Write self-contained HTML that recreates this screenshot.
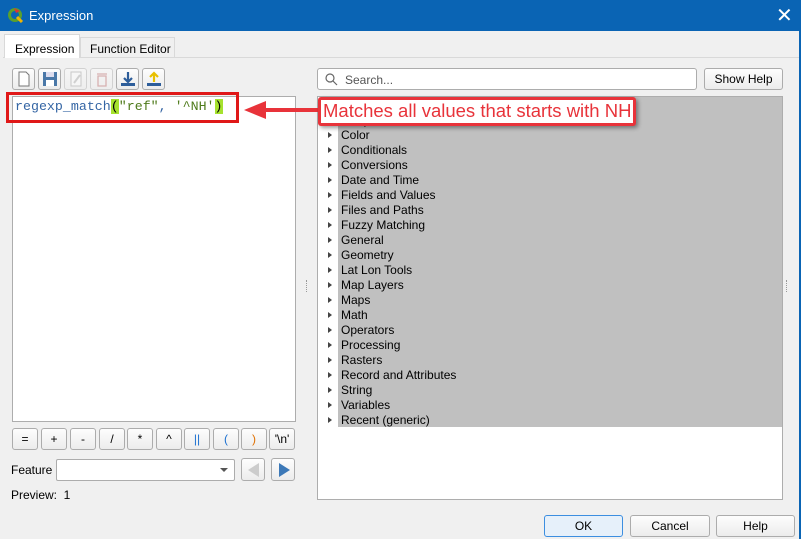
<!DOCTYPE html>
<html><head><meta charset="utf-8"><style>
*{box-sizing:border-box;margin:0;padding:0}
body{width:801px;height:539px;background:#f0f0f0;font-family:"Liberation Sans",sans-serif;font-size:12px;color:#000;position:relative;overflow:hidden}
.abs{position:absolute}
.btn{position:absolute;background:linear-gradient(#fdfdfd,#ececec);border:1px solid #acacac;border-radius:3px;text-align:center;font-size:12px}
.tree div{height:15px;line-height:15px;position:relative;padding-left:23px}
.tree div:before{content:"";position:absolute;left:10px;top:4px;border-left:4px solid #444;border-top:3.5px solid transparent;border-bottom:3.5px solid transparent}
</style></head><body>
<div class="abs" style="left:0;top:0;width:801px;height:31px;background:#0a64b4"></div>
<div class="abs" style="left:799px;top:0;width:2px;height:539px;background:#0a64b4"></div>
<svg class="abs" style="left:8px;top:7px" width="16" height="16" viewBox="0 0 16 16"><circle cx="7" cy="8" r="5.5" fill="none" stroke="#5aa02c" stroke-width="3"/><path d="M9 10l5 5" stroke="#f0b400" stroke-width="3"/><path d="M6 1l6 3-4 2z" fill="#d33"/></svg>
<div class="abs" style="left:29px;top:8px;color:#fff;font-size:13px">Expression</div>
<div class="abs" style="left:776px;top:3px;color:#fff;font-size:20px">✕</div>
<div class="abs" style="left:3px;top:57px;width:796px;height:1px;background:#d9d9d9"></div>
<div class="abs" style="left:4px;top:34px;width:76px;height:24px;background:#fff;border:1px solid #d9d9d9;border-bottom:none;padding:7px 0 0 10px">Expression</div>
<div class="abs" style="left:80px;top:37px;width:95px;height:20px;background:#f0f0f0;border:1px solid #d9d9d9;border-bottom:none;padding:4px 0 0 9px">Function Editor</div>
<div class="btn" style="left:12px;top:68px;width:23px;height:22px"><svg width="14" height="16" style="margin-top:2px"><path d="M2 1h7l3 3v11H2z" fill="#fff" stroke="#777"/></svg></div>
<div class="btn" style="left:38px;top:68px;width:23px;height:22px"><svg width="16" height="16" style="margin-top:2px"><rect x="1" y="1" width="14" height="14" fill="#4a78a8"/><rect x="4" y="1" width="8" height="5" fill="#dde"/><rect x="4" y="9" width="8" height="6" fill="#fff"/></svg></div>
<div class="btn" style="left:64px;top:68px;width:23px;height:22px;opacity:.45"><svg width="14" height="16" style="margin-top:2px"><path d="M2 1h10v14H2z" fill="#fff" stroke="#999"/><path d="M5 12l6-8" stroke="#aaa" stroke-width="2"/></svg></div>
<div class="btn" style="left:90px;top:68px;width:23px;height:22px;opacity:.45"><svg width="14" height="16" style="margin-top:2px"><path d="M3 5h8v10H3zM2 3h10" fill="none" stroke="#b66" stroke-width="1.3"/></svg></div>
<div class="btn" style="left:116px;top:68px;width:23px;height:22px"><svg width="16" height="16" style="margin-top:2px"><path d="M8 1v9M4 7l4 4 4-4" fill="none" stroke="#2d5d9a" stroke-width="2.2"/><rect x="1" y="12" width="14" height="3" fill="#2d5d9a"/></svg></div>
<div class="btn" style="left:142px;top:68px;width:23px;height:22px"><svg width="16" height="16" style="margin-top:2px"><path d="M8 11V3M4 6l4-4 4 4" fill="none" stroke="#e8c000" stroke-width="2.2"/><rect x="1" y="12" width="14" height="3" fill="#2d5d9a"/></svg></div>
<div class="abs" style="left:12px;top:96px;width:284px;height:326px;background:#fff;border:1px solid #adadad"></div>
<div class="abs" style="left:6px;top:92px;width:233px;height:31px;border:3px solid #e01818"></div>
<div class="abs" style="left:15px;top:99px;font-family:'Liberation Mono',monospace;font-size:13.3px;color:#3465a4;white-space:pre">regexp_match<span style="background:#a6e22e;color:#000">(</span><span style="color:#4e7a1a">"ref"</span>, <span style="color:#4e7a1a">'^NH'</span><span style="background:#a6e22e;color:#000">)</span></div>
<div class="btn" style="left:12px;top:428px;width:26px;height:22px;line-height:20px">=</div>
<div class="btn" style="left:41px;top:428px;width:26px;height:22px;line-height:20px">+</div>
<div class="btn" style="left:70px;top:428px;width:26px;height:22px;line-height:20px">-</div>
<div class="btn" style="left:99px;top:428px;width:26px;height:22px;line-height:20px">/</div>
<div class="btn" style="left:127px;top:428px;width:26px;height:22px;line-height:20px">*</div>
<div class="btn" style="left:156px;top:428px;width:26px;height:22px;line-height:20px">^</div>
<div class="btn" style="left:184px;top:428px;width:26px;height:22px;line-height:20px;color:#1a6fd0">||</div>
<div class="btn" style="left:213px;top:428px;width:26px;height:22px;line-height:20px;color:#1a6fd0">(</div>
<div class="btn" style="left:241px;top:428px;width:26px;height:22px;line-height:20px;color:#e07000">)</div>
<div class="btn" style="left:269px;top:428px;width:26px;height:22px;line-height:20px">'\n'</div>
<div class="abs" style="left:11px;top:463px">Feature</div>
<div class="abs" style="left:56px;top:459px;width:179px;height:22px;background:#fff;border:1px solid #acacac;border-radius:2px"><div class="abs" style="left:163px;top:8px;border-top:4px solid #555;border-left:4px solid transparent;border-right:4px solid transparent"></div></div>
<div class="btn" style="left:241px;top:458px;width:24px;height:23px"><div class="abs" style="left:6px;top:4px;border-right:11px solid #ccc;border-top:7px solid transparent;border-bottom:7px solid transparent"></div></div>
<div class="btn" style="left:271px;top:458px;width:24px;height:23px"><div class="abs" style="left:7px;top:4px;border-left:11px solid #3d79b8;border-top:7px solid transparent;border-bottom:7px solid transparent"></div></div>
<div class="abs" style="left:11px;top:488px">Preview:&nbsp; 1</div>
<div class="abs" style="left:317px;top:68px;width:380px;height:22px;background:#fff;border:1px solid #acacac;border-radius:3px"><svg class="abs" style="left:7px;top:4px" width="13" height="13"><circle cx="5" cy="5" r="4" fill="none" stroke="#666" stroke-width="1.2"/><path d="M8 8l4 4" stroke="#666" stroke-width="1.2"/></svg><span class="abs" style="left:27px;top:4px;color:#555">Search...</span></div>
<div class="btn" style="left:704px;top:68px;width:79px;height:22px;line-height:20px">Show Help</div>
<div class="abs" style="left:317px;top:96px;width:466px;height:404px;background:#fff;border:1px solid #adadad"></div>
<div class="abs" style="left:338px;top:97px;width:444px;height:330px;background:#c0c0c0"></div>
<div class="abs tree" style="left:318px;top:98px;width:464px">
<div>Aggregates</div><div>Arrays</div><div>Color</div><div>Conditionals</div><div>Conversions</div><div>Date and Time</div><div>Fields and Values</div><div>Files and Paths</div><div>Fuzzy Matching</div><div>General</div><div>Geometry</div><div>Lat Lon Tools</div><div>Map Layers</div><div>Maps</div><div>Math</div><div>Operators</div><div>Processing</div><div>Rasters</div><div>Record and Attributes</div><div>String</div><div>Variables</div><div>Recent (generic)</div>
</div>
<div class="abs" style="left:262px;top:108px;width:60px;height:4px;background:#e8333a"></div>
<div class="abs" style="left:244px;top:101px;border-right:22px solid #e8333a;border-top:9px solid transparent;border-bottom:9px solid transparent"></div>
<div class="abs" style="left:318px;top:97px;width:318px;height:29px;background:#fff;border:3px solid #e8333a;border-radius:3px;box-shadow:2px 2px 4px rgba(0,0,0,.4);color:#e8333a;font-size:18.5px;line-height:22px;padding-left:2px;white-space:nowrap">Matches all values that starts with NH</div>
<div class="abs" style="left:306px;top:280px;width:1px;height:12px;border-left:1px dotted #999"></div>
<div class="abs" style="left:786px;top:280px;width:1px;height:12px;border-left:1px dotted #999"></div>
<div class="btn" style="left:544px;top:515px;width:79px;height:22px;line-height:20px;border-color:#3c8ee0;background:#e6f0fa">OK</div>
<div class="btn" style="left:630px;top:515px;width:80px;height:22px;line-height:20px">Cancel</div>
<div class="btn" style="left:716px;top:515px;width:79px;height:22px;line-height:20px">Help</div>
</body></html>
